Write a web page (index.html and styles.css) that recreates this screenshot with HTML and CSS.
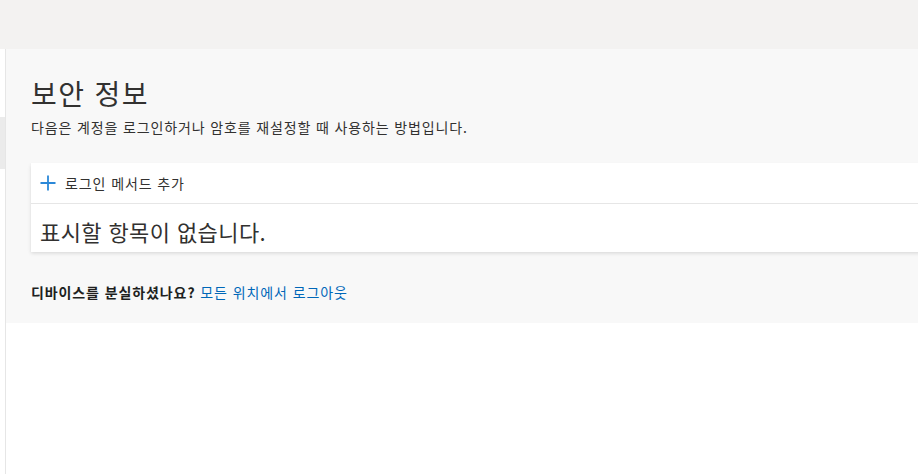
FILE: index.html
```html
<!DOCTYPE html>
<html lang="ko">
<head>
<meta charset="utf-8">
<link rel="stylesheet" href="styles.css">
</head>
<body>
<header class="topbar"></header>
<div class="layout">
  <nav class="sidebar">
    <div class="nav-selected"></div>
  </nav>
  <main class="main">
    <section class="content">
      <h1 class="title">보안 정보</h1>
      <p class="subtitle">다음은 계정을 로그인하거나 암호를 재설정할 때 사용하는 방법입니다.</p>
      <div class="card">
        <div class="card-row add-row">
          <svg class="plus" width="16" height="16" viewBox="0 0 16 16"><path d="M8 0.5V15.5M0.5 8H15.5" stroke="#2b88d8" stroke-width="1.8" fill="none"/></svg>
          <span>로그인 메서드 추가</span>
        </div>
        <div class="card-row empty-row">표시할 항목이 없습니다.</div>
      </div>
      <p class="lost"><strong>디바이스를 분실하셨나요?</strong> <a href="#" class="link">모든 위치에서 로그아웃</a></p>
    </section>
  </main>
</div>
</body>
</html>
```
FILE: styles.css
```css
* { box-sizing: border-box; }
html, body { margin: 0; padding: 0; }
body {
  width: 918px;
  height: 474px;
  overflow: hidden;
  background: #ffffff;
  font-family: "Noto Sans CJK KR", "Noto Sans", sans-serif;
  color: #323130;
}
.topbar {
  height: 49px;
  background: #f3f2f1;
}
.layout {
  display: flex;
  height: 425px;
}
.sidebar {
  width: 6px;
  flex: none;
  background: #ffffff;
  border-right: 1px solid #e6e6e6;
  padding-top: 68px;
}
.nav-selected {
  height: 52px;
  background: #ebebeb;
}
.main {
  flex: 1;
  min-width: 0;
}
.content {
  background: #f8f8f8;
  padding: 24px 0 0 25px;
  height: 274px;
  overflow: hidden;
}
.title {
  margin: 0;
  font-size: 28px;
  font-weight: 400;
  line-height: 40px;
  color: #323130;
  letter-spacing: 1.4px;
}
.subtitle {
  margin: 4px 0 0 0;
  font-size: 14px;
  line-height: 20px;
  letter-spacing: 0.86px;
  color: #323130;
}
.card {
  margin-top: 26px;
  background: #ffffff;
  width: 900px;
  box-shadow: 0 1.6px 3.6px rgba(0,0,0,0.13), 0 0.3px 0.9px rgba(0,0,0,0.11);
}
.card-row {
  display: flex;
  align-items: center;
  padding-left: 9px;
}
.add-row {
  height: 41px;
  border-bottom: 1px solid #e6e6e6;
  font-size: 14px;
  letter-spacing: 0.9px;
  gap: 9px;
  color: #323130;
}
.plus { display: block; flex: none; }
.empty-row {
  height: 48px;
  font-size: 22px;
  letter-spacing: 0.4px;
  color: #323130;
  padding-top: 6px;
}
.lost {
  margin: 30px 0 0 0;
  font-size: 14px;
  line-height: 20px;
  letter-spacing: 0.9px;
}
.lost strong { font-weight: 700; color: #201f1e; }
.link {
  color: #0067b8;
  text-decoration: none;
}
```
